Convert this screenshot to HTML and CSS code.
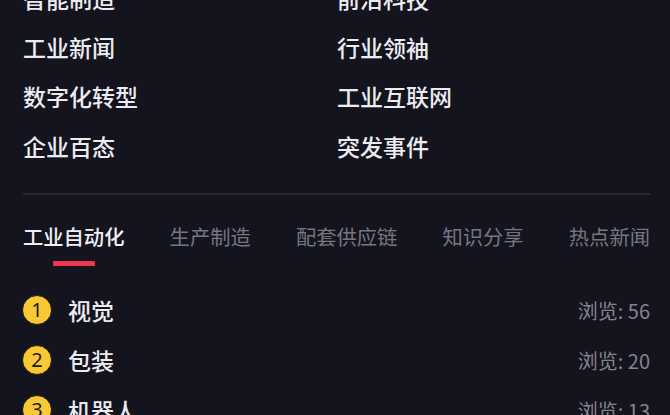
FILE: index.html
```html
<!DOCTYPE html>
<html lang="zh-CN">
<head>
<meta charset="utf-8">
<title>工业资讯</title>
<link rel="stylesheet" href="styles.css">
</head>
<body>
<main class="page">
  <nav class="channels">
    <a class="channel">智能制造</a>
    <a class="channel">前沿科技</a>
    <a class="channel">工业新闻</a>
    <a class="channel">行业领袖</a>
    <a class="channel">数字化转型</a>
    <a class="channel">工业互联网</a>
    <a class="channel">企业百态</a>
    <a class="channel">突发事件</a>
  </nav>

  <hr class="divider">

  <div class="tabs">
    <span class="tab is-active">工业自动化</span>
    <span class="tab">生产制造</span>
    <span class="tab">配套供应链</span>
    <span class="tab">知识分享</span>
    <span class="tab">热点新闻</span>
  </div>

  <ol class="ranking">
    <li class="rank-item">
      <span class="rank-no">1</span>
      <span class="rank-title">视觉</span>
      <span class="rank-views">浏览: 56</span>
    </li>
    <li class="rank-item">
      <span class="rank-no">2</span>
      <span class="rank-title">包装</span>
      <span class="rank-views">浏览: 20</span>
    </li>
    <li class="rank-item">
      <span class="rank-no">3</span>
      <span class="rank-title">机器人</span>
      <span class="rank-views">浏览: 13</span>
    </li>
  </ol>
</main>
</body>
</html>
```

FILE: styles.css
```css
* {
  box-sizing: border-box;
}

html, body {
  margin: 0;
  height: 100%;
  background: #14141f;
  overflow: hidden;
}

body {
  font-family: "Noto Sans CJK SC", "Noto Sans", sans-serif;
  color: #ececf0;
}

.page {
  padding: 0 20px 0 23px;
  margin-top: -27px;
}

/* channel links, two columns */
.channels {
  display: grid;
  grid-template-columns: 314px 1fr;
  grid-auto-rows: 49.3px;
  align-items: center;
}

.channel {
  font-size: 23px;
  font-weight: 500;
  line-height: 30px;
  color: #ececf0;
}

.divider {
  margin: 23px 0 0;
  border: 0;
  height: 2px;
  background: #272734;
}

/* category tabs */
.tabs {
  display: flex;
  justify-content: space-between;
  margin-top: 27px;
}

.tab {
  position: relative;
  font-size: 20.3px;
  line-height: 28px;
  color: #767682;
  padding-bottom: 16px;
}

.tab.is-active {
  color: #f0f0f3;
  font-weight: 500;
}

.tab.is-active::after {
  content: "";
  position: absolute;
  left: 50%;
  bottom: 0;
  width: 42px;
  height: 5px;
  margin-left: -21px;
  border-radius: 1px;
  background: #f0354e;
}

/* ranking list */
.ranking {
  list-style: none;
  margin: 19px 0 0;
  padding: 0;
}

.rank-item {
  display: flex;
  align-items: center;
  height: 50px;
}

.rank-no {
  flex: none;
  width: 30px;
  height: 30px;
  border-radius: 50%;
  background: #f7c934;
  border: 1.5px solid #1f1a10;
  color: #1d1a14;
  font-family: "Noto Sans", sans-serif;
  font-size: 20px;
  line-height: 27px;
  text-align: center;
  margin-left: -1px;
}

.rank-title {
  margin-left: 16px;
  font-size: 23px;
  font-weight: 500;
  line-height: 30px;
  color: #ececf0;
}

.rank-views {
  margin-left: auto;
  font-size: 20px;
  color: #84848f;
}
```
